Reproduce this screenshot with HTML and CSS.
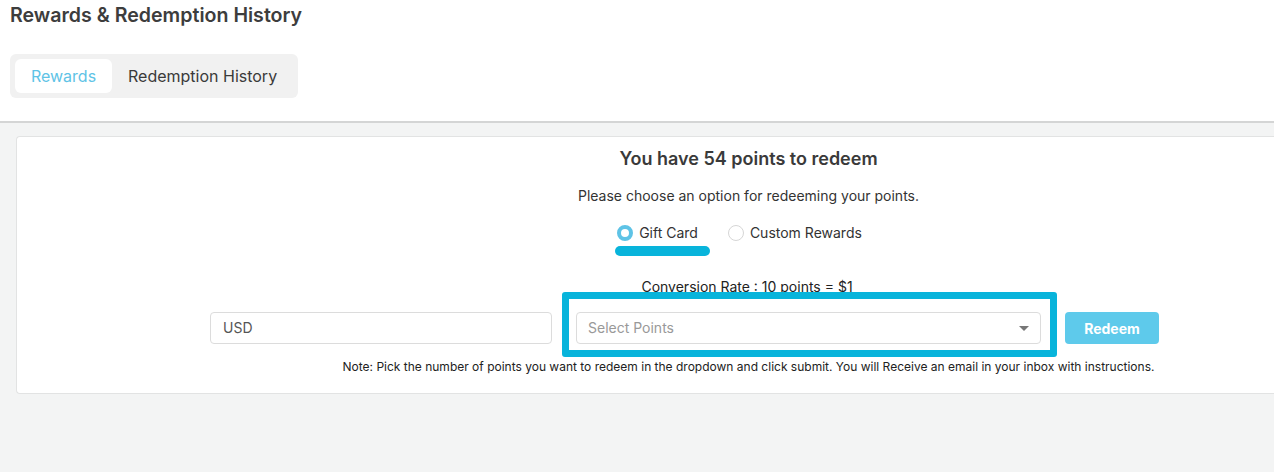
FILE: index.html
```html
<!DOCTYPE html>
<html>
<head>
<meta charset="utf-8">
<link rel="stylesheet" href="styles.css">
</head>
<body>
<header class="top">
  <h1 class="title">Rewards &amp; Redemption History</h1>
  <div class="tabs">
    <div class="tab active">Rewards</div>
    <div class="tab">Redemption History</div>
  </div>
</header>
<main class="page">
  <section class="card">
    <h2 class="points">You have 54 points to redeem</h2>
    <p class="choose">Please choose an option for redeeming your points.</p>
    <div class="options">
      <label class="option">
        <span class="radio checked"></span>
        <span>Gift Card</span>
        <span class="mark-bar"></span>
      </label>
      <label class="option">
        <span class="radio"></span>
        <span>Custom Rewards</span>
      </label>
    </div>
    <p class="rate">Conversion Rate : 10 points = $1</p>
    <div class="form-row">
      <div class="field currency">USD</div>
      <div class="select-wrap">
        <div class="field select">
          <span class="placeholder">Select Points</span>
          <span class="caret"></span>
        </div>
        <span class="mark-box"></span>
      </div>
      <button class="redeem">Redeem</button>
    </div>
    <p class="note">Note: Pick the number of points you want to redeem in the dropdown and click submit. You will Receive an email in your inbox with instructions.</p>
  </section>
</main>
</body>
</html>
```

FILE: styles.css
```css
html, body {
  margin: 0;
  padding: 0;
  overflow: hidden;
  height: 100%;
}
body {
  font-family: Inter, "Noto Sans", sans-serif;
  color: #333;
  background: #f3f4f4;
}
.top {
  background: #fff;
  height: 121px;
  border-bottom: 2px solid #d4d5d5;
  padding: 0 10px;
}
.title {
  margin: 0;
  padding-top: 3px;
  font-size: 19.6px;
  line-height: 24px;
  font-weight: 600;
  color: #3d3d3d;
}
.tabs {
  display: inline-flex;
  margin-top: 27px;
  background: #f1f1f1;
  border-radius: 6px;
  padding: 5px;
}
.tab {
  height: 34px;
  line-height: 34px;
  font-size: 16px;
  color: #3a3a3a;
  padding: 0 16px;
  border-radius: 6px;
}
.tab.active {
  background: #fff;
  color: #5ec3e6;
  width: 97px;
  box-sizing: border-box;
  text-align: center;
  padding: 0;
}
.page {
  padding: 13px 0 0 16px;
}
.card {
  height: 256px;
  background: #fff;
  border: 1px solid #e2e3e3;
  border-right: none;
  border-radius: 4px 0 0 4px;
  padding-left: 206px;
  display: flex;
  flex-direction: column;
  align-items: center;
}
.points {
  margin: 11px 0 0;
  font-size: 18px;
  line-height: 22px;
  font-weight: 600;
  color: #3a3a3a;
}
.choose {
  margin: 17px 0 0;
  font-size: 14px;
  line-height: 18px;
  color: #333;
}
.options {
  display: flex;
  gap: 30px;
  margin-top: 20px;
  margin-left: -18px;
}
.option {
  position: relative;
  display: flex;
  align-items: center;
  gap: 6px;
  font-size: 14px;
  line-height: 16px;
  color: #333;
}
.radio {
  width: 16px;
  height: 16px;
  box-sizing: border-box;
  border-radius: 50%;
  border: 1px solid #d6d6d6;
  background: #fff;
}
.radio.checked {
  border: 4px solid #5ec3e6;
}
.mark-bar {
  position: absolute;
  left: -2px;
  top: 21px;
  width: 95px;
  height: 10px;
  border-radius: 5px;
  background: #08b4db;
}
.rate {
  margin: 38px 0 0 -3px;
  font-size: 14px;
  line-height: 16px;
  color: #222;
}
.form-row {
  display: flex;
  align-self: flex-start;
  margin-left: -13px;
  margin-top: 17px;
  gap: 24px;
}
.field {
  height: 32px;
  box-sizing: border-box;
  border: 1px solid #dcdcdc;
  border-radius: 4px;
  font-size: 14px;
  line-height: 30px;
  padding: 0 12px;
  background: #fff;
}
.currency {
  width: 342px;
  color: #555;
}
.select-wrap {
  position: relative;
}
.select {
  width: 465px;
  display: flex;
  justify-content: space-between;
  align-items: center;
  padding: 0 11px;
}
.placeholder {
  color: #999;
}
.caret {
  width: 0;
  height: 0;
  border-left: 5px solid transparent;
  border-right: 5px solid transparent;
  border-top: 5px solid #777;
}
.mark-box {
  position: absolute;
  left: -14px;
  top: -20px;
  width: 495px;
  height: 65px;
  box-sizing: border-box;
  border: 7px solid #08b4db;
  border-radius: 3px;
}
.redeem {
  width: 94px;
  height: 32px;
  border: none;
  border-radius: 4px;
  background: #5ecaeb;
  color: #fff;
  font-family: Inter, sans-serif;
  font-weight: 700;
  font-size: 14px;
  padding: 0;
}
.note {
  margin: 16px 0 0;
  font-size: 12px;
  line-height: 14px;
  color: #222;
}
```
